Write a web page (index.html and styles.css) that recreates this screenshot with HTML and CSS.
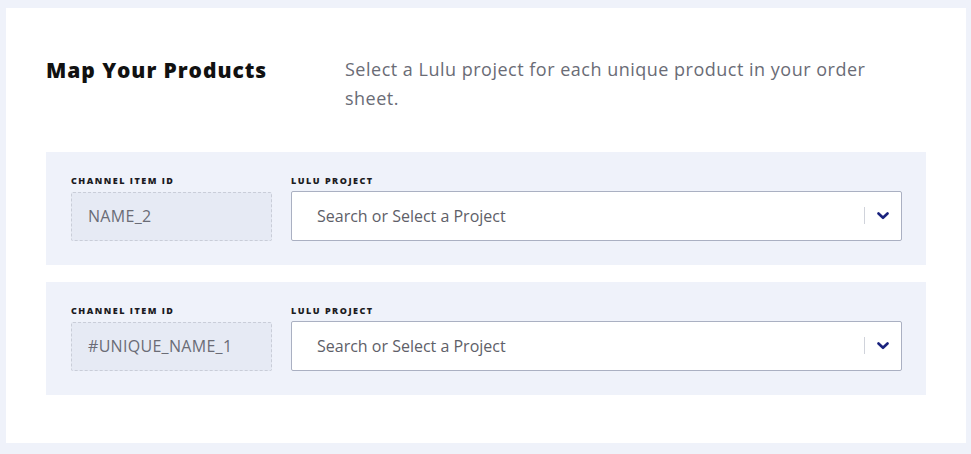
FILE: index.html
```html
<!DOCTYPE html>
<html>
<head>
<meta charset="utf-8">
<link rel="stylesheet" href="styles.css">
</head>
<body>
<div class="card">
  <div class="header">
    <h1 class="title">Map Your Products</h1>
    <p class="desc">Select a Lulu project for each unique product in your order sheet.</p>
  </div>
  <div class="rows">
    <div class="row">
      <div class="col-id">
        <div class="label">Channel Item ID</div>
        <div class="idbox">NAME_2</div>
      </div>
      <div class="col-proj">
        <div class="label">Lulu Project</div>
        <div class="select">
          <span class="placeholder">Search or Select a Project</span>
          <span class="indicators">
            <span class="sep"></span>
            <svg class="chev" width="12" height="8" viewBox="0 0 12 8"><path d="M1.5 1.5 L6 5.8 L10.5 1.5" fill="none" stroke="#1a237e" stroke-width="2.6" stroke-linecap="round" stroke-linejoin="round"/></svg>
          </span>
        </div>
      </div>
    </div>
    <div class="row">
      <div class="col-id">
        <div class="label">Channel Item ID</div>
        <div class="idbox">#UNIQUE_NAME_1</div>
      </div>
      <div class="col-proj">
        <div class="label">Lulu Project</div>
        <div class="select">
          <span class="placeholder">Search or Select a Project</span>
          <span class="indicators">
            <span class="sep"></span>
            <svg class="chev" width="12" height="8" viewBox="0 0 12 8"><path d="M1.5 1.5 L6 5.8 L10.5 1.5" fill="none" stroke="#1a237e" stroke-width="2.6" stroke-linecap="round" stroke-linejoin="round"/></svg>
          </span>
        </div>
      </div>
    </div>
  </div>
</div>
</body>
</html>
```
FILE: styles.css
```css
html, body {
  margin: 0;
  padding: 0;
  background: #eff2fa;
}
body {
  padding: 8px 5px 11px 6px;
  font-family: "Open Sans", "Noto Sans", sans-serif;
}
.card {
  background: #ffffff;
  height: 435px;
  box-sizing: border-box;
  padding: 0 40px;
}
.header {
  display: flex;
  padding-top: 48px;
  height: 144px;
  box-sizing: border-box;
}
.title {
  margin: 0;
  width: 299px;
  flex: none;
  font-size: 21px;
  font-weight: 800;
  color: #111;
  line-height: 28px;
  letter-spacing: 0.95px;
}
.desc {
  margin: 0;
  width: 560px;
  font-size: 18px;
  line-height: 29px;
  color: #6a6c76;
  margin-top: -1px;
  letter-spacing: 0.5px;
}
.rows {
  display: flex;
  flex-direction: column;
  gap: 17px;
}
.row {
  background: #eff2fa;
  height: 113px;
  box-sizing: border-box;
  padding: 23px 24px 0 25px;
  display: flex;
  gap: 19px;
}
.col-id {
  width: 201px;
  flex: none;
}
.col-proj {
  flex: 1;
}
.label {
  font-size: 9px;
  font-weight: 800;
  text-transform: uppercase;
  letter-spacing: 1.5px;
  color: #1b1b22;
  line-height: 12px;
  height: 17px;
}
.idbox {
  height: 49px;
  box-sizing: border-box;
  border: 1px dashed #c9cdd8;
  background: #e6eaf4;
  border-radius: 2px;
  display: flex;
  align-items: center;
  padding-left: 16px;
  padding-bottom: 1px;
  font-size: 16px;
  color: #6a6c76;
  letter-spacing: 0.3px;
}
.select {
  height: 50px;
  margin-top: -1px;
  box-sizing: border-box;
  border: 1px solid #aab0c2;
  background: #fff;
  border-radius: 2px;
  display: flex;
  align-items: center;
  padding-left: 25px;
  padding-bottom: 1px;
}
.placeholder {
  flex: 1;
  font-size: 16px;
  color: #5e6068;
}
.indicators {
  display: flex;
  align-items: center;
  height: 100%;
}
.sep {
  width: 1px;
  height: 17px;
  background: #d0d3db;
  margin-right: 12px;
}
.chev {
  margin-right: 12px;
  display: block;
}
```
